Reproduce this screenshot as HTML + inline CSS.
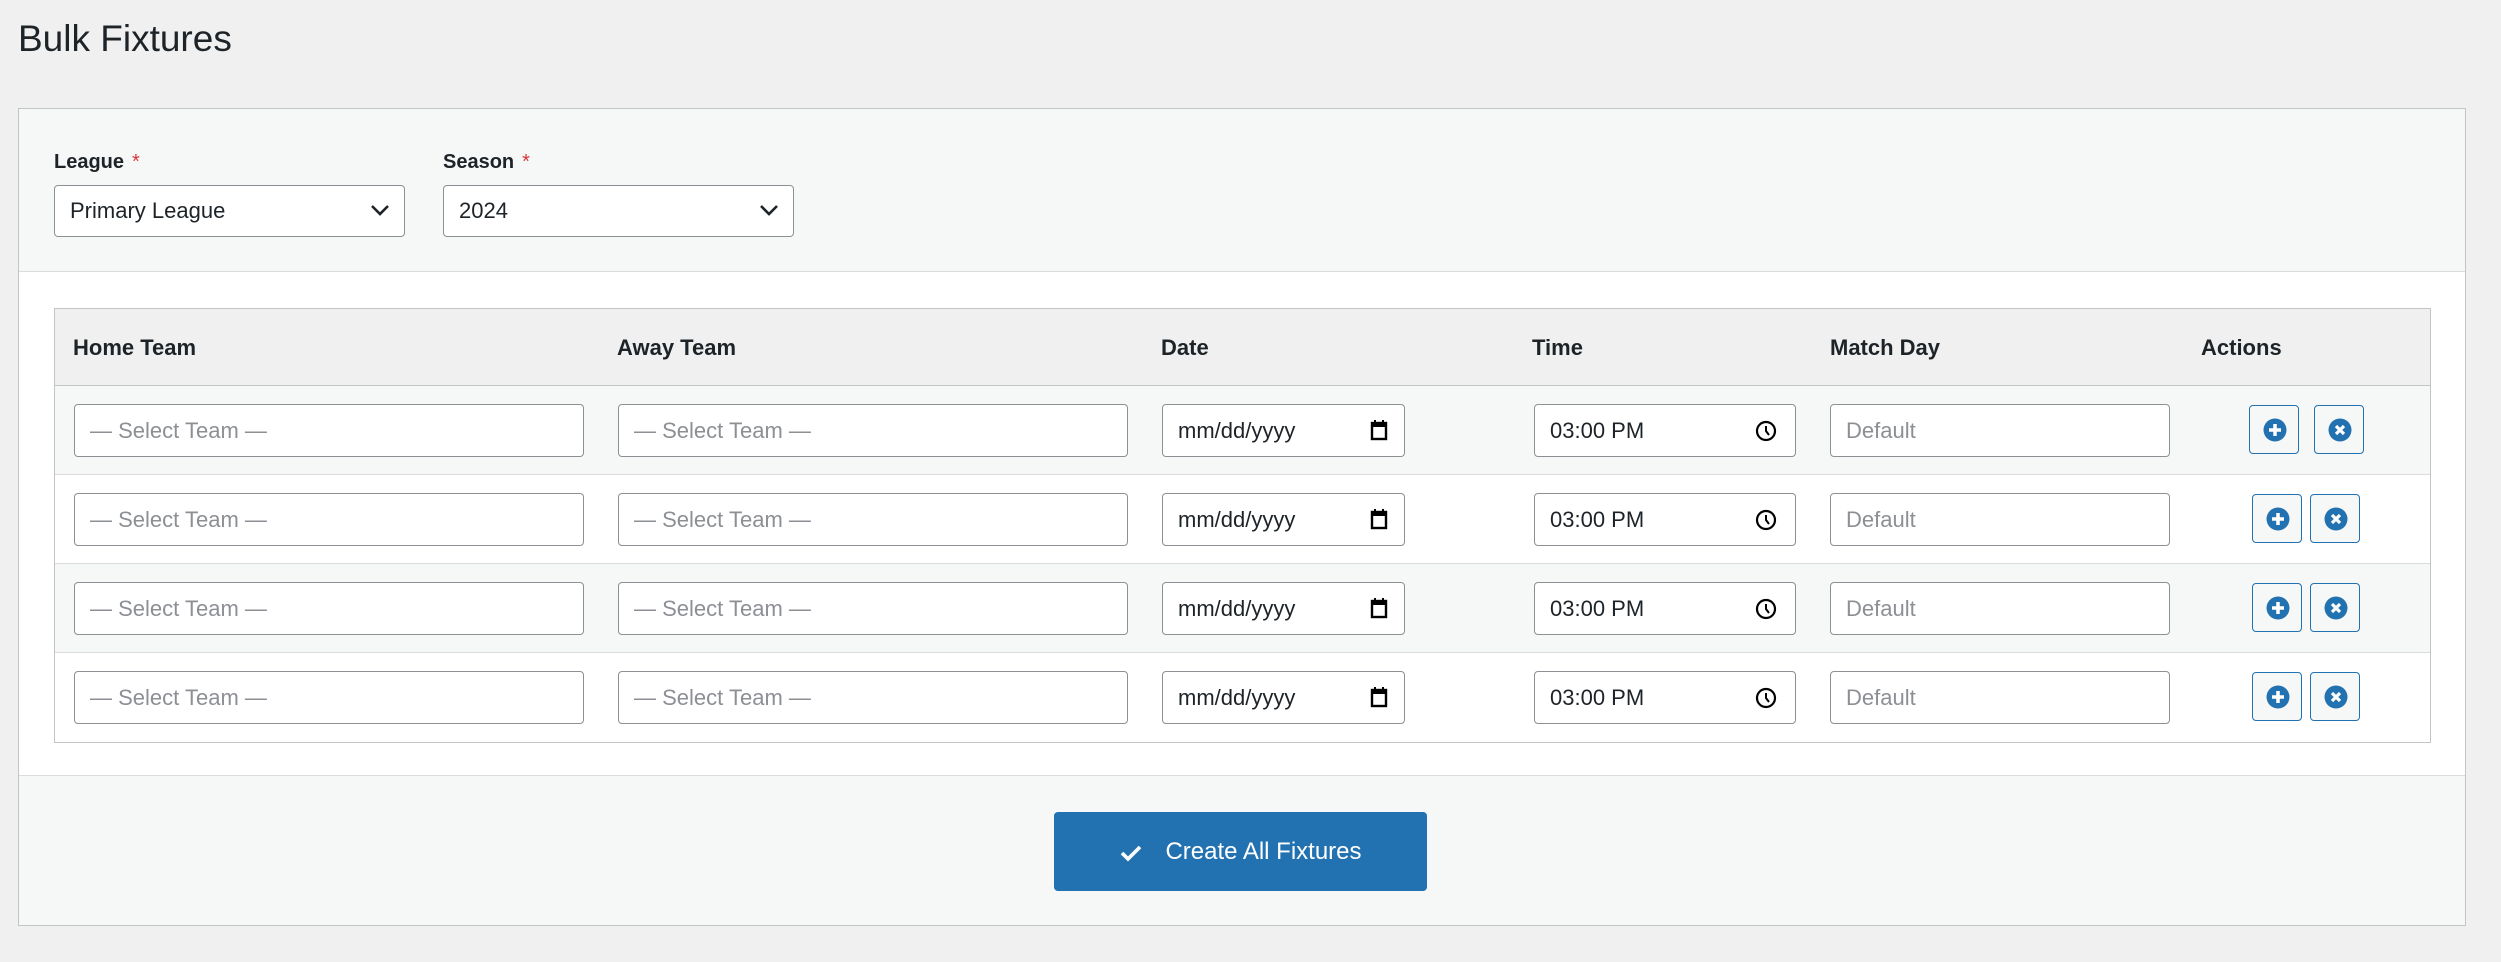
<!DOCTYPE html>
<html><head><meta charset="utf-8"><style>
*{box-sizing:border-box;margin:0;padding:0}
body{width:2501px;height:962px;background:#f0f0f1;font-family:"Liberation Sans",sans-serif;color:#1d2327;position:relative;overflow:hidden}
.a{position:absolute}
h1{position:absolute;left:18px;top:18px;font-size:37px;font-weight:400;color:#1d2327}
.box{left:18px;top:108px;width:2448px;height:818px;background:#fff;border:1px solid #c3c4c7}
.sec{left:0;width:2446px;background:#f6f7f7}
.lbl{font-size:20px;font-weight:700;color:#1d2327}
.lbl span{color:#d63638;font-weight:400;margin-left:8px}
.sel{height:52px;border:1px solid #8c8f94;border-radius:4px;background:#fff;font-size:22px;padding:0 15px;line-height:50px}
.sel svg{position:absolute;right:14px;top:17px}
.tbl{left:35px;top:199px;width:2377px;height:435px;border:1px solid #c3c4c7}
.th{top:0;height:77px;width:100%;background:#f0f0f0;border-bottom:1px solid #c3c4c7}
.th div{position:absolute;top:26px;font-size:22px;font-weight:700}
.row{left:0;width:100%;height:89px;border-bottom:1px solid #dcdcde}
.in{top:18px;height:53px;border:1px solid #8c8f94;border-radius:4px;background:#fff;font-size:22px;line-height:51px;padding-left:15px;color:#1d2327}
.ph{color:#8c8f94}
.btn{top:19px;width:50px;height:49px;border:1px solid #2271b1;border-radius:4px;background:#f6f7f7}
.btn svg{position:absolute;left:13px;top:12px}
.go{left:1035px;top:703px;width:373px;height:79px;background:#2271b1;border-radius:4px;color:#fff;font-size:24px;line-height:79px;text-align:center}
</style></head><body>
<h1>Bulk Fixtures</h1>
<div class="a box">
 <div class="a sec" style="top:0;height:163px;border-bottom:1px solid #dcdcde">
  <div class="a lbl" style="left:35px;top:42px">League<span>*</span></div>
  <div class="a lbl" style="left:424px;top:42px">Season<span>*</span></div>
  <div class="a sel" style="left:35px;top:76px;width:351px">Primary League<svg width="20" height="14" viewBox="0 0 20 14"><path d="M2 3l8 8 8-8" fill="none" stroke="#1d2327" stroke-width="2.6"/></svg></div>
  <div class="a sel" style="left:424px;top:76px;width:351px">2024<svg width="20" height="14" viewBox="0 0 20 14"><path d="M2 3l8 8 8-8" fill="none" stroke="#1d2327" stroke-width="2.6"/></svg></div>
 </div>
 <div class="a tbl">
  <div class="a th"><div style="left:18px">Home Team</div><div style="left:562px">Away Team</div><div style="left:1106px">Date</div><div style="left:1477px">Time</div><div style="left:1775px">Match Day</div><div style="left:2146px">Actions</div></div>
  <div class="a row" style="top:77px;background:#f6f7f7">
   <div class="a in ph" style="left:19px;width:510px">— Select Team —</div>
   <div class="a in ph" style="left:563px;width:510px">— Select Team —</div>
   <div class="a in" style="left:1107px;width:243px">mm/dd/yyyy<svg class="a" style="right:16px;top:14px" width="18" height="22" viewBox="0 0 18 22"><rect x="2" y="4" width="14" height="16" fill="none" stroke="#000" stroke-width="2.4"/><rect x="2" y="4" width="14" height="4" fill="#000"/><path d="M5 1v4M13 1v4" stroke="#000" stroke-width="2"/></svg></div>
   <div class="a in" style="left:1479px;width:262px">03:00 PM<svg class="a" style="right:18px;top:15px" width="22" height="22" viewBox="0 0 22 22"><circle cx="11" cy="11" r="9" fill="none" stroke="#000" stroke-width="2.2"/><path d="M11 6v5l3 4" fill="none" stroke="#000" stroke-width="2"/></svg></div>
   <div class="a in ph" style="left:1775px;width:340px">Default</div>
   <div class="a btn" style="left:2194px"><svg width="24" height="24" viewBox="0 0 24 24"><circle cx="12" cy="12" r="11.5" fill="#2271b1"/><path d="M12 6v12M6 12h12" stroke="#fff" stroke-width="3.5"/></svg></div>
   <div class="a btn" style="left:2259px"><svg width="24" height="24" viewBox="0 0 24 24"><circle cx="12" cy="12" r="11.5" fill="#2271b1"/><path d="M8 8l8 8M16 8l-8 8" stroke="#fff" stroke-width="3.2"/></svg></div>
  </div>
  <div class="a row" style="top:166px;background:#fff">
   <div class="a in ph" style="left:19px;width:510px">— Select Team —</div>
   <div class="a in ph" style="left:563px;width:510px">— Select Team —</div>
   <div class="a in" style="left:1107px;width:243px">mm/dd/yyyy<svg class="a" style="right:16px;top:14px" width="18" height="22" viewBox="0 0 18 22"><rect x="2" y="4" width="14" height="16" fill="none" stroke="#000" stroke-width="2.4"/><rect x="2" y="4" width="14" height="4" fill="#000"/><path d="M5 1v4M13 1v4" stroke="#000" stroke-width="2"/></svg></div>
   <div class="a in" style="left:1479px;width:262px">03:00 PM<svg class="a" style="right:18px;top:15px" width="22" height="22" viewBox="0 0 22 22"><circle cx="11" cy="11" r="9" fill="none" stroke="#000" stroke-width="2.2"/><path d="M11 6v5l3 4" fill="none" stroke="#000" stroke-width="2"/></svg></div>
   <div class="a in ph" style="left:1775px;width:340px">Default</div>
   <div class="a btn" style="left:2197px"><svg width="24" height="24" viewBox="0 0 24 24"><circle cx="12" cy="12" r="11.5" fill="#2271b1"/><path d="M12 6v12M6 12h12" stroke="#fff" stroke-width="3.5"/></svg></div>
   <div class="a btn" style="left:2255px"><svg width="24" height="24" viewBox="0 0 24 24"><circle cx="12" cy="12" r="11.5" fill="#2271b1"/><path d="M8 8l8 8M16 8l-8 8" stroke="#fff" stroke-width="3.2"/></svg></div>
  </div>
  <div class="a row" style="top:255px;background:#f6f7f7">
   <div class="a in ph" style="left:19px;width:510px">— Select Team —</div>
   <div class="a in ph" style="left:563px;width:510px">— Select Team —</div>
   <div class="a in" style="left:1107px;width:243px">mm/dd/yyyy<svg class="a" style="right:16px;top:14px" width="18" height="22" viewBox="0 0 18 22"><rect x="2" y="4" width="14" height="16" fill="none" stroke="#000" stroke-width="2.4"/><rect x="2" y="4" width="14" height="4" fill="#000"/><path d="M5 1v4M13 1v4" stroke="#000" stroke-width="2"/></svg></div>
   <div class="a in" style="left:1479px;width:262px">03:00 PM<svg class="a" style="right:18px;top:15px" width="22" height="22" viewBox="0 0 22 22"><circle cx="11" cy="11" r="9" fill="none" stroke="#000" stroke-width="2.2"/><path d="M11 6v5l3 4" fill="none" stroke="#000" stroke-width="2"/></svg></div>
   <div class="a in ph" style="left:1775px;width:340px">Default</div>
   <div class="a btn" style="left:2197px"><svg width="24" height="24" viewBox="0 0 24 24"><circle cx="12" cy="12" r="11.5" fill="#2271b1"/><path d="M12 6v12M6 12h12" stroke="#fff" stroke-width="3.5"/></svg></div>
   <div class="a btn" style="left:2255px"><svg width="24" height="24" viewBox="0 0 24 24"><circle cx="12" cy="12" r="11.5" fill="#2271b1"/><path d="M8 8l8 8M16 8l-8 8" stroke="#fff" stroke-width="3.2"/></svg></div>
  </div>
  <div class="a row" style="top:344px;background:#fff;border-bottom:none">
   <div class="a in ph" style="left:19px;width:510px">— Select Team —</div>
   <div class="a in ph" style="left:563px;width:510px">— Select Team —</div>
   <div class="a in" style="left:1107px;width:243px">mm/dd/yyyy<svg class="a" style="right:16px;top:14px" width="18" height="22" viewBox="0 0 18 22"><rect x="2" y="4" width="14" height="16" fill="none" stroke="#000" stroke-width="2.4"/><rect x="2" y="4" width="14" height="4" fill="#000"/><path d="M5 1v4M13 1v4" stroke="#000" stroke-width="2"/></svg></div>
   <div class="a in" style="left:1479px;width:262px">03:00 PM<svg class="a" style="right:18px;top:15px" width="22" height="22" viewBox="0 0 22 22"><circle cx="11" cy="11" r="9" fill="none" stroke="#000" stroke-width="2.2"/><path d="M11 6v5l3 4" fill="none" stroke="#000" stroke-width="2"/></svg></div>
   <div class="a in ph" style="left:1775px;width:340px">Default</div>
   <div class="a btn" style="left:2197px"><svg width="24" height="24" viewBox="0 0 24 24"><circle cx="12" cy="12" r="11.5" fill="#2271b1"/><path d="M12 6v12M6 12h12" stroke="#fff" stroke-width="3.5"/></svg></div>
   <div class="a btn" style="left:2255px"><svg width="24" height="24" viewBox="0 0 24 24"><circle cx="12" cy="12" r="11.5" fill="#2271b1"/><path d="M8 8l8 8M16 8l-8 8" stroke="#fff" stroke-width="3.2"/></svg></div>
  </div>
 </div>
 <div class="a sec" style="top:666px;height:150px;border-top:1px solid #dcdcde">
  <div class="a go" style="top:36px"><svg style="vertical-align:middle;margin-right:22px" width="24" height="20" viewBox="0 0 24 20"><path d="M3 10l6 6L21 4" fill="none" stroke="#fff" stroke-width="3.6"/></svg>Create All Fixtures</div>
 </div>
</div>
</body></html>
